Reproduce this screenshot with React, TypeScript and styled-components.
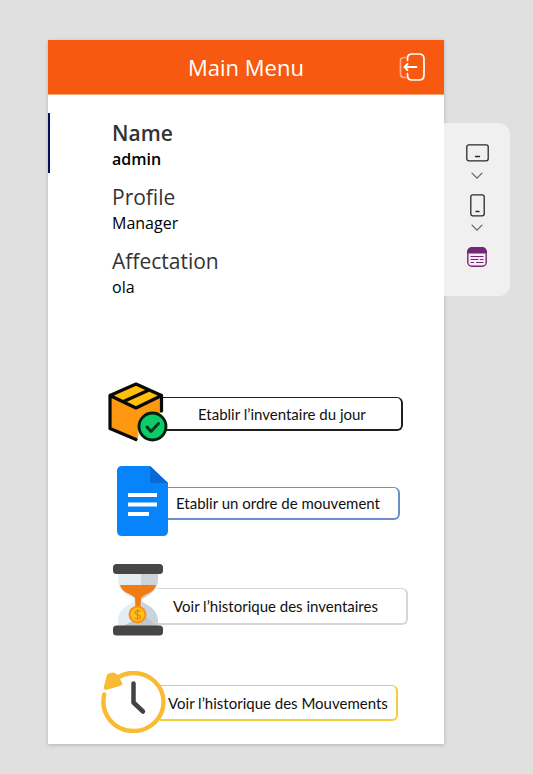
import React from "react";
import styled, { createGlobalStyle } from "styled-components";

const GlobalStyle = createGlobalStyle`
  * { box-sizing: border-box; }
  body {
    margin: 0;
    background: #e0e0e0;
    font-family: "Open Sans", "Noto Sans", sans-serif;
  }
  button { font: inherit; color: inherit; background: none; border: 0; padding: 0; cursor: pointer; }
  svg { display: block; }
`;

const Workspace = styled.div`
  display: flex;
  align-items: flex-start;
  min-height: 100vh;
  padding: 40px 23px 30px 48px;
`;

const Screen = styled.main`
  flex: 1;
  min-width: 0;
  padding-bottom: 11px;
  background: #fff;
  box-shadow: 0 1px 4px rgba(0, 0, 0, 0.2);
`;

const Header = styled.header`
  display: grid;
  grid-template-columns: 1fr auto 1fr;
  align-items: center;
  height: 55px;
  padding: 0 18px;
  color: #fff;
  background: #f85910;
  border-bottom: 1px solid #fba273;
`;

const Title = styled.h1`
  grid-column: 2;
  margin: 0;
  font-size: 22px;
  line-height: 30px;
  font-weight: 400;
`;

const ExitButton = styled.button`
  justify-self: end;
`;

const Details = styled.dl`
  display: flex;
  flex-direction: column;
  gap: 4px;
  margin: 18px 0 0;
`;

const Detail = styled.div<{ $selected?: boolean }>`
  height: 60px;
  padding: 6px 0 0 62px;
  border-left: 2px solid ${(p) => (p.$selected ? "#00125f" : "transparent")};
  font-weight: ${(p) => (p.$selected ? 600 : 400)};
`;

const Term = styled.dt`
  color: #333;
  font-size: 21px;
  line-height: 28px;
`;

const Value = styled.dd`
  margin: 0;
  color: #000;
  font-size: 16px;
  line-height: 24px;
`;

const Menu = styled.nav`
  display: flex;
  flex-direction: column;
  padding-top: 81px;
`;

type ItemShape = { $top: number; $left: number; $right: number };

const MenuItem = styled.button<ItemShape>`
  display: flex;
  align-items: flex-start;
  margin: ${(p) => `${p.$top}px ${p.$right}px 0 ${p.$left}px`};
  text-align: left;
`;

const Art = styled.span`
  z-index: 1;
  flex: none;
`;

const Frame = styled.span<{ $drop: number; $height: number; $color: string; $indent: number }>`
  flex: 1;
  display: flex;
  align-items: center;
  height: ${(p) => p.$height}px;
  margin: ${(p) => p.$drop}px 0 0 -6px;
  padding-left: ${(p) => p.$indent}px;
  border: solid ${(p) => p.$color};
  border-width: 1px 2px 2px 0;
  border-radius: 0 6px 6px 0;
  color: #111;
  font-family: Lato, "Open Sans", sans-serif;
  font-size: 15px;
  line-height: 20px;
  white-space: nowrap;
`;

const SidePanel = styled.aside`
  flex: none;
  display: flex;
  flex-direction: column;
  align-items: center;
  width: 66px;
  height: 173px;
  margin-top: 83px;
  padding-top: 18px;
  background: #f0f0f0;
  border-radius: 0 11px 11px 0;
`;

const ToolButton = styled.button<{ $height: number }>`
  display: grid;
  place-items: center;
  width: 28px;
  height: ${(p) => p.$height}px;
`;

const ExitIcon = () => (
  <svg width="28" height="30" viewBox="0 0 28 30" fill="none" stroke="#fff" strokeLinecap="round">
    <path d="M7.500 5.500H6Q2.500 5.500 2.500 9v12.500q0 4 3.500 4h1.500" strokeWidth="1.700" opacity=".5" />
    <path d="M9.500 8.500v-2q0-4.500 4.500-4.500h7q5 0 5 5v16q0 5-5 5h-7q-4.500 0-4.500-4.500v-2" strokeWidth="1.700" />
    <path d="M18.500 15H7M9.500 12l-3 3 3 3" strokeWidth="1.900" strokeLinejoin="round" />
  </svg>
);

const BoxArt = () => (
  <svg width="60" height="60" viewBox="0 0 60 60" strokeLinejoin="round" strokeLinecap="round">
    <path d="M2 13.500 28 2l25.500 11.500L28 26Z" fill="#ffbf0b" />
    <path d="M28 26v31L2 47V13.500Z" fill="#ff9811" />
    <path d="M28 26 53.500 13.500V45L28 57Z" fill="#ff9811" />
    <path d="M30 60V44l14.500-15.500H56V60Z" fill="#fff" />
    <path d="M28 26h25.500v5H44.500Q31 32 29.500 45l1 8-2.500 4Z" fill="#ff9811" />
    <path d="M28 57.500 2 46.500v-33L28 2l25.500 11.500V29M2 13.500 28 26l25.500-12.500M15.500 19.500 41 8" fill="none" stroke="#080806" strokeWidth="3.200" />
    <circle cx="44.500" cy="44.500" r="13.500" fill="#0dcb67" stroke="#071d12" strokeWidth="2.800" />
    <path d="m39 45 4 4.500 7.500-8" fill="none" stroke="#06361d" strokeWidth="3" />
  </svg>
);

const DocumentArt = () => (
  <svg width="51" height="70" viewBox="0 0 51 70">
    <path d="M5 0h28l18 17v48q0 5-5 5H5q-5 0-5-5V5q0-5 5-5Z" fill="#0784fa" />
    <path d="M33 0v17h18Z" fill="#0868d5" />
    <path d="M11 27h29v4H11zM11 36.500h29v4H11zM11 46h21v4H11z" fill="#fff" />
  </svg>
);

const HourglassArt = () => (
  <svg width="50" height="74" viewBox="0 0 50 74">
    <path d="M5 8h40v8c0 10-7 15-14 19q-4 2.500 0 5c8 4 14 9 14 18v6H5v-6c0-9 6-14 14-18q4-2.500 0-5C12 31 5 26 5 16Z" fill="#e4edf4" />
    <path d="M28 8h17v8c0 10-7 15-14 19q-4 2.500 0 5c8 4 14 9 14 18v6H29Z" fill="#cbd4db" />
    <path d="M5 64q15-3 23-15l17 15Z" fill="#bcc7ce" />
    <path d="M7 22h36c-2 8-10 8-15 13l-1 23h-4l-1-23C17 30 9 30 7 22Z" fill="#f27c14" />
    <circle cx="24.500" cy="51.500" r="9" fill="#f5931b" />
    <circle cx="24.500" cy="51.500" r="6.800" fill="#ffc31b" />
    <path d="M27.500 48.500q-3-2-5 0t2 3q5 2 2 4-2 1-5-.5M24.500 46v11" fill="none" stroke="#e88713" strokeWidth="1.300" />
    <rect y="1" width="50" height="10" rx="3.500" fill="#464646" />
    <rect y="62.500" width="50" height="10" rx="3.500" fill="#464646" />
  </svg>
);

const ClockArt = () => (
  <svg width="65" height="62" viewBox="0 0 65 62" fill="none" strokeLinecap="round" strokeLinejoin="round">
    <circle cx="32.500" cy="31" r="29" fill="#fff" />
    <path d="M3.200 23.500C-1 43 13 60 32.500 60a30 29 0 0 0 0-58Q22 2 14 8.500" stroke="#f9bb31" strokeWidth="4.400" />
    <path d="M8 5q5-3 8 2l3 5.500-14 4Z" fill="#f9bb31" stroke="#f9bb31" strokeWidth="4.500" />
    <path d="M32.500 12.500v19l9.500 9" stroke="#424242" strokeWidth="4.500" />
  </svg>
);

const TabletIcon = () => (
  <svg width="23" height="18" viewBox="0 0 23 18" fill="none" stroke="#292929" strokeLinecap="round">
    <rect x=".8" y=".8" width="21.400" height="16" rx="2" strokeWidth="1.300" />
    <path d="M9.500 12.500h4" strokeWidth="1.300" />
  </svg>
);

const PhoneIcon = () => (
  <svg width="15" height="23" viewBox="0 0 15 23" fill="none" stroke="#292929" strokeLinecap="round">
    <rect x=".8" y=".8" width="13.400" height="21" rx="2" strokeWidth="1.300" />
    <path d="M6 17.500h3" strokeWidth="1.300" />
  </svg>
);

const ChevronIcon = () => (
  <svg width="12" height="8" viewBox="0 0 12 8" fill="none" stroke="#616161" strokeWidth="1.200" strokeLinecap="round">
    <path d="m1 1.200 5 5 5-5" />
  </svg>
);

const FormIcon = () => (
  <svg width="20" height="20" viewBox="0 0 20 20" fill="none" stroke="#742774">
    <rect x=".8" y=".8" width="18.400" height="18.400" rx="4" strokeWidth="1.400" fill="#f7edf7" />
    <path d="M.8 6V4.500Q.8.8 4.500.8h11q3.700 0 3.700 3.700V6Z" fill="#742774" />
    <path d="M3.500 9.500h13M3.500 12.500h8M13 12.500h3.500M3.500 15.500h3.500M9 15.500h7.500" strokeWidth="1.200" />
  </svg>
);

const details = [
  { term: "Name", value: "admin", selected: true },
  { term: "Profile", value: "Manager" },
  { term: "Affectation", value: "ola" },
];

const items = [
  { label: "Etablir l’inventaire du jour", art: <BoxArt />, top: 0, left: 60, right: 41, drop: 15, height: 34, indent: 36, color: "#202020" },
  { label: "Etablir un ordre de mouvement", art: <DocumentArt />, top: 24, left: 69, right: 44, drop: 21, height: 33, indent: 14, color: "#6d8fca" },
  { label: "Voir l’historique des inventaires", art: <HourglassArt />, top: 27, left: 65, right: 36, drop: 25, height: 37, indent: 16, color: "#d5d5d5" },
  { label: "Voir l’historique des Mouvements", art: <ClockArt />, top: 34, left: 53, right: 46, drop: 14, height: 36, indent: 8, color: "#f5cb40" },
];

export default function App() {
  return (
    <>
      <GlobalStyle />
      <Workspace>
        <Screen>
          <Header>
            <Title>Main Menu</Title>
            <ExitButton aria-label="Exit"><ExitIcon /></ExitButton>
          </Header>
          <Details>
            {details.map((d) => (
              <Detail key={d.term} $selected={d.selected}>
                <Term>{d.term}</Term>
                <Value>{d.value}</Value>
              </Detail>
            ))}
          </Details>
          <Menu>
            {items.map((i) => (
              <MenuItem key={i.label} $top={i.top} $left={i.left} $right={i.right}>
                <Art>{i.art}</Art>
                <Frame $drop={i.drop} $height={i.height} $indent={i.indent} $color={i.color}>{i.label}</Frame>
              </MenuItem>
            ))}
          </Menu>
        </Screen>
        <SidePanel>
          <ToolButton $height={23} aria-label="Tablet layout"><TabletIcon /></ToolButton>
          <ToolButton $height={24} aria-label="Tablet options"><ChevronIcon /></ToolButton>
          <ToolButton $height={34} aria-label="Phone layout"><PhoneIcon /></ToolButton>
          <ToolButton $height={12} aria-label="Phone options"><ChevronIcon /></ToolButton>
          <ToolButton $height={46} aria-label="Form"><FormIcon /></ToolButton>
        </SidePanel>
      </Workspace>
    </>
  );
}
